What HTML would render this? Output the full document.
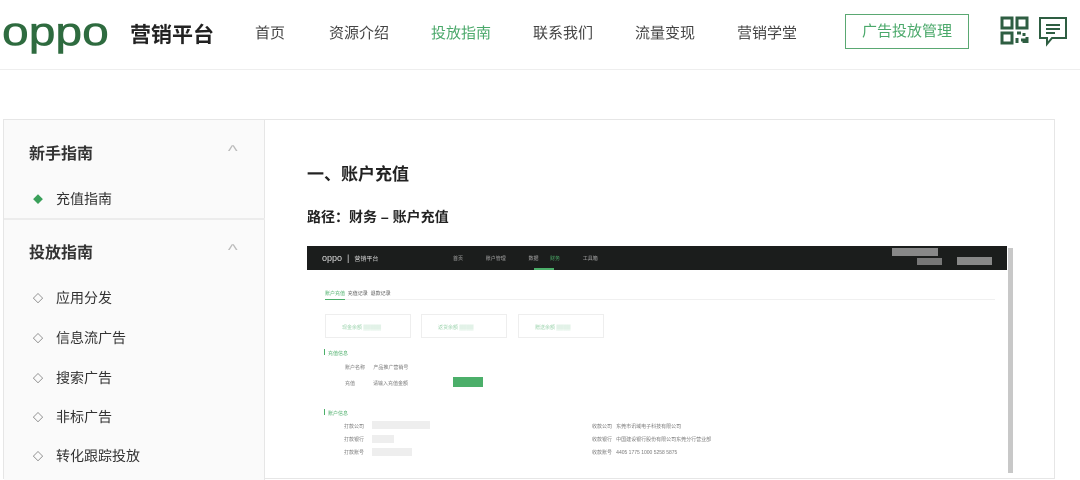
<!DOCTYPE html>
<html><head><meta charset="utf-8"><style>
*{margin:0;padding:0;box-sizing:border-box}
body{width:1080px;height:473px;overflow:hidden;background:#fff;font-family:"Liberation Sans","Noto Sans CJK SC",sans-serif;position:relative;color:#333}
.a{position:absolute;white-space:nowrap}
.nav{font-size:15px;color:#444;top:22px}
.g{color:#3aa05a}
.side{font-size:14px;color:#333}
.bl{background:#eee;height:8px}
</style></head><body>
<!-- header -->
<div class="a" style="left:2px;top:9px;font-size:40px;line-height:46px;color:#2e6b3f;transform:scaleX(1.2);transform-origin:0 0;-webkit-text-stroke:0.6px #2e6b3f">oppo</div>
<div class="a" style="left:130px;top:19px;font-size:21px;font-weight:bold;color:#222">营销平台</div>
<div class="a nav" style="left:255px">首页</div>
<div class="a nav" style="left:329px">资源介绍</div>
<div class="a nav g" style="left:431px;color:#4aa86a">投放指南</div>
<div class="a nav" style="left:533px">联系我们</div>
<div class="a nav" style="left:635px">流量变现</div>
<div class="a nav" style="left:737px">营销学堂</div>
<div class="a" style="left:845px;top:14px;width:124px;height:35px;border:1px solid #5aa872;color:#4aa86a;font-size:15px;text-align:center;line-height:33px">广告投放管理</div>
<svg class="a" style="left:1000px;top:16px" width="30" height="30" viewBox="0 0 30 30" fill="none" stroke="#2e5e42" stroke-width="3"><rect x="2" y="2" width="10" height="10"/><rect x="17" y="2" width="10" height="10"/><rect x="2" y="17" width="10" height="10"/><path d="M17 17h4M24 17v3M17 22v5M21 24h3v3M27 21v6" /></svg>
<svg class="a" style="left:1038px;top:16px" width="30" height="32" viewBox="0 0 30 32" fill="none" stroke="#2e5e42" stroke-width="2"><path d="M2 2h26v20H14l-5 6v-6H2z"/><path d="M8 9h14M8 13h14M8 17h9"/></svg>
<div class="a" style="left:0;top:69px;width:1080px;height:1px;background:#eee"></div>
<!-- panel -->
<div class="a" style="left:3px;top:119px;width:1052px;height:360px;border:1px solid #e6e6e6"></div>
<div class="a" style="left:4px;top:120px;width:261px;height:360px;background:#fafafa;border-right:1px solid #e6e6e6"></div>
<div class="a" style="left:4px;top:218px;width:261px;height:2px;background:#ececec"></div>
<div class="a" style="left:29px;top:140px;font-size:16px;font-weight:bold">新手指南</div>
<div class="a" style="left:229px;top:143px;color:#bbb;font-size:16px;transform:scaleX(1.3)">^</div>
<div class="a" style="left:33px;top:191px;color:#3aa05a;font-size:10px">◆</div>
<div class="a side g" style="left:56px;top:189px">充值指南</div>
<div class="a" style="left:29px;top:239px;font-size:16px;font-weight:bold">投放指南</div>
<div class="a" style="left:229px;top:242px;color:#bbb;font-size:16px;transform:scaleX(1.3)">^</div>
<div class="a side" style="left:33px;top:290px;font-size:10px">◇</div><div class="a side" style="left:56px;top:288px">应用分发</div>
<div class="a side" style="left:33px;top:330px;font-size:10px">◇</div><div class="a side" style="left:56px;top:328px">信息流广告</div>
<div class="a side" style="left:33px;top:370px;font-size:10px">◇</div><div class="a side" style="left:56px;top:368px">搜索广告</div>
<div class="a side" style="left:33px;top:409px;font-size:10px">◇</div><div class="a side" style="left:56px;top:407px">非标广告</div>
<div class="a side" style="left:33px;top:448px;font-size:10px">◇</div><div class="a side" style="left:56px;top:446px">转化跟踪投放</div>
<!-- content -->
<div class="a" style="left:307px;top:160px;font-size:17px;font-weight:bold;color:#222">一、账户充值</div>
<div class="a" style="left:307px;top:207px;font-size:14px;font-weight:bold;color:#222">路径：财务 – 账户充值</div>
<!-- screenshot -->
<div class="a" style="left:307px;top:246px;width:700px;height:24px;background:#1b1d1c"></div>
<div class="a" style="left:322px;top:253px;color:#ddd;font-size:9px">oppo &nbsp;|&nbsp; <span style="font-size:6px">营销平台</span></div>
<div class="a" style="left:453px;top:255px;color:#aaa;font-size:5px;word-spacing:10px">首页 &nbsp;账户管理 &nbsp;数据 <span style="color:#4caf6a">财务</span> &nbsp;工具箱</div>
<div class="a" style="left:534px;top:268px;width:20px;height:2px;background:#4caf6a"></div>
<div class="a" style="left:892px;top:248px;width:46px;height:8px;background:#888"></div>
<div class="a" style="left:917px;top:258px;width:25px;height:7px;background:#777"></div>
<div class="a" style="left:957px;top:257px;width:35px;height:8px;background:#888"></div>
<div class="a" style="left:1008px;top:248px;width:5px;height:225px;background:#c8c8c8"></div>
<div class="a" style="left:325px;top:290px;font-size:5px;color:#555"><span style="color:#4caf6a">账户充值</span> &nbsp;充值记录 &nbsp;退款记录</div>
<div class="a" style="left:325px;top:299px;width:20px;height:1px;background:#4caf6a"></div>
<div class="a" style="left:345px;top:299px;width:650px;height:1px;background:#f0f0f0"></div>
<div class="a" style="left:325px;top:314px;width:86px;height:24px;border:1px solid #eee"></div>
<div class="a" style="left:421px;top:314px;width:86px;height:24px;border:1px solid #eee"></div>
<div class="a" style="left:518px;top:314px;width:86px;height:24px;border:1px solid #eee"></div>
<div class="a" style="left:342px;top:324px;font-size:5px;color:#9cd3ad">现金余额 ▒▒▒▒▒</div>
<div class="a" style="left:438px;top:324px;font-size:5px;color:#9cd3ad">返货余额 ▒▒▒▒</div>
<div class="a" style="left:535px;top:324px;font-size:5px;color:#9cd3ad">赠送余额 ▒▒▒▒</div>
<div class="a" style="left:324px;top:349px;width:1px;height:6px;background:#4caf6a"></div>
<div class="a" style="left:328px;top:350px;font-size:5px;color:#4caf6a">充值信息</div>
<div class="a" style="left:453px;top:377px;width:30px;height:10px;background:#4caf6a"></div>
<div class="a" style="left:324px;top:409px;width:1px;height:6px;background:#4caf6a"></div>
<div class="a" style="left:328px;top:410px;font-size:5px;color:#4caf6a">账户信息</div>
<div class="a" style="left:344px;top:423px;font-size:5px;color:#777">打款公司</div>
<div class="a" style="left:344px;top:436px;font-size:5px;color:#777">打款银行</div>
<div class="a" style="left:344px;top:449px;font-size:5px;color:#777">打款账号</div>
<div class="a bl" style="left:372px;top:421px;width:58px"></div>
<div class="a bl" style="left:372px;top:435px;width:22px"></div>
<div class="a bl" style="left:372px;top:448px;width:40px"></div>
<div class="a" style="left:345px;top:364px;font-size:5px;color:#777">账户名称 &nbsp;&nbsp;&nbsp;&nbsp; 产品推广营销号</div>
<div class="a" style="left:345px;top:380px;font-size:5px;color:#777">充值 &nbsp;&nbsp;&nbsp;&nbsp;&nbsp;&nbsp;&nbsp;&nbsp;&nbsp;&nbsp;&nbsp; 请输入充值金额</div>
<div class="a" style="left:592px;top:423px;font-size:5px;color:#777">收款公司 &nbsp; 东莞市讯域电子科技有限公司</div>
<div class="a" style="left:592px;top:436px;font-size:5px;color:#777">收款银行 &nbsp; 中国建设银行股份有限公司东莞分行营业部</div>
<div class="a" style="left:592px;top:449px;font-size:5px;color:#777">收款账号 &nbsp; 4405 1775 1000 5258 5875</div>
</body></html>
